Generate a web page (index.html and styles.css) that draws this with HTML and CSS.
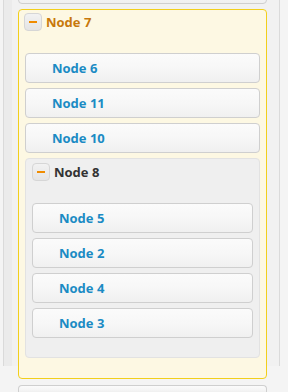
FILE: index.html
```html
<!DOCTYPE html>
<html lang="en">
<head>
    <meta charset="UTF-8">
    <title>Tree</title>
    <link rel="stylesheet" href="styles.css">
</head>
<body>
    <div class="panel">
        <div class="panel-inner">
            <div class="item item-prev"></div>

            <div class="group group-active">
                <div class="group-head">
                    <span class="toggle"></span>
                    <span class="group-title">Node 7</span>
                </div>
                <div class="item"><span class="label">Node 6</span></div>
                <div class="item"><span class="label">Node 11</span></div>
                <div class="item"><span class="label">Node 10</span></div>

                <div class="group">
                    <div class="group-head">
                        <span class="toggle"></span>
                        <span class="group-title">Node 8</span>
                    </div>
                    <div class="item"><span class="label">Node 5</span></div>
                    <div class="item"><span class="label">Node 2</span></div>
                    <div class="item"><span class="label">Node 4</span></div>
                    <div class="item"><span class="label">Node 3</span></div>
                </div>
            </div>

            <div class="item item-next"></div>
        </div>
    </div>
</body>
</html>
```

FILE: styles.css
```css
html, body {
    margin: 0;
    height: 100%;
    overflow: hidden;
}
body {
    font-family: "Open Sans", Arial, sans-serif;
    background: #f4f4f4;
}
.panel {
    margin-left: 3px;
    width: 277px;
    height: 100%;
    border-left: 1px solid #dadada;
    border-right: 1px solid #dadada;
    background: #ebebeb;
    padding-left: 8px;
    box-sizing: border-box;
}
.panel-inner {
    height: 100%;
    background: #f1f1f1;
    padding: 0 12px 0 6px;
    box-sizing: border-box;
}
.item {
    height: 30px;
    box-sizing: border-box;
    border: 1px solid #cfcfcf;
    border-radius: 4px;
    background: linear-gradient(#fbfbfb, #f7f7f7 50%, #f0f0f0);
    padding-left: 26px;
    display: flex;
    align-items: center;
    margin-top: 5px;
}
.item-prev {
    margin-top: -26px;
}
.item-next {
    margin-top: 6px;
    height: 7px;
    border-bottom: none;
    border-radius: 4px 4px 0 0;
}
.label {
    font-size: 13px;
    font-weight: 700;
    color: #1b8bc4;
}
.group {
    margin-top: 5px;
    border: 1px solid #e2e2e2;
    border-radius: 4px;
    background: #efefef;
    padding: 4px 6px 19px 6px;
}
.group-active {
    margin-top: 5px;
    border-color: #f2cf1c;
    background: #fdf8e3;
    padding: 3px 6px 20px 6px;
}
.group-head {
    display: flex;
    align-items: center;
    height: 18px;
    margin-bottom: 22px;
}
.group-active > .group-head {
    margin-left: -1px;
}
.toggle {
    width: 18px;
    height: 18px;
    box-sizing: border-box;
    border: 1px solid #d6d6d6;
    border-radius: 4px;
    background: linear-gradient(#f2f2f2, #e4e4e4);
    position: relative;
    margin-right: 4px;
}
.toggle::after {
    content: "";
    position: absolute;
    left: 4px;
    top: 7px;
    width: 8px;
    height: 2px;
    background: #f08c00;
}
.group-title {
    font-size: 13px;
    font-weight: 700;
    color: #333;
}
.group-active > .group-head .group-title {
    color: #c8780c;
}
```
